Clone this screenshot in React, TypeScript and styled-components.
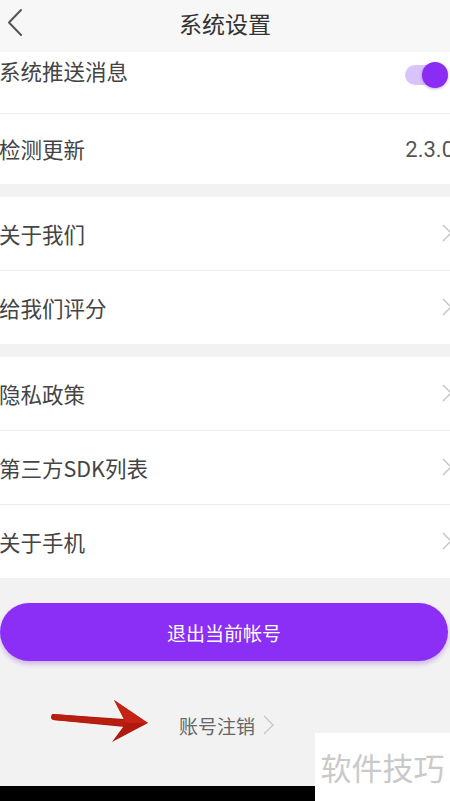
import styled, { createGlobalStyle } from "styled-components";

const GlobalStyle = createGlobalStyle`
  html, body {
    margin: 0;
    padding: 0;
    background: #f2f2f2;
  }
  * {
    box-sizing: border-box;
  }
`;

type Item = { label: string; extra?: "toggle" | "version" | "arrow"; height: number };

const groups: Item[][] = [
  [
    { label: "系统推送消息", extra: "toggle", height: 62 },
    { label: "检测更新", extra: "version", height: 70 },
  ],
  [
    { label: "关于我们", extra: "arrow", height: 74 },
    { label: "给我们评分", extra: "arrow", height: 73 },
  ],
  [
    { label: "隐私政策", extra: "arrow", height: 74 },
    { label: "第三方SDK列表", extra: "arrow", height: 74 },
    { label: "关于手机", extra: "arrow", height: 73 },
  ],
];

export default function App() {
  return (
    <Screen>
      <GlobalStyle />
      <Header>
        <BackButton>
          <svg width="18" height="30" viewBox="0 0 18 30">
            <polyline points="15,2 3,14.5 15,27" fill="none" stroke="#555" strokeWidth="2" strokeLinecap="round" strokeLinejoin="round" />
          </svg>
        </BackButton>
        <Title>系统设置</Title>
      </Header>

      {groups.map((group, gi) => (
        <Group key={gi}>
          {group.map((item, i) => (
            <Row key={item.label} $height={item.height} $top={gi === 0 && i === 0}>
              <Label>{item.label}</Label>
              {item.extra === "toggle" && (
                <Toggle>
                  <Knob />
                </Toggle>
              )}
              {item.extra === "version" && <Version>2.3.0</Version>}
              {item.extra === "arrow" && (
                <Chevron width="12" height="18" viewBox="0 0 12 18">
                  <polyline points="1,1 9,9 1,17" fill="none" stroke="#c4c4c4" strokeWidth="1.4" />
                </Chevron>
              )}
            </Row>
          ))}
        </Group>
      ))}

      <LogoutButton>退出当前帐号</LogoutButton>

      <CancelArea>
        <PointerArrow width="104" height="46" viewBox="0 0 104 46">
          <path d="M2 14 L74 19 L75 27 L3 20 Z" fill="#a8160c" />
          <line x1="4" y1="17" x2="74" y2="23" stroke="#b81d10" strokeWidth="6" strokeLinecap="round" />
          <polygon points="64,0 98,23 62,42 76,23" fill="#b01a0e" />
          <polygon points="64,0 98,23 76,23" fill="#c52415" />
        </PointerArrow>
        <CancelLink>
          账号注销
          <svg width="12" height="20" viewBox="0 0 12 20">
            <polyline points="1,1 10,10 1,19" fill="none" stroke="#c8c8c8" strokeWidth="1.4" />
          </svg>
        </CancelLink>
      </CancelArea>

      <BottomBar />
      <Watermark>软件技巧</Watermark>
    </Screen>
  );
}

const Screen = styled.div`
  position: relative;
  width: 450px;
  height: 801px;
  overflow: hidden;
  display: flex;
  flex-direction: column;
  background: #f2f2f2;
  font-family: "Noto Sans CJK SC", "Noto Sans", Roboto, sans-serif;
`;

const Header = styled.div`
  height: 52px;
  flex-shrink: 0;
  display: flex;
  align-items: center;
  justify-content: center;
  position: relative;
  background: #f7f7f7;
`;

const BackButton = styled.div`
  position: absolute;
  left: 6px;
  top: 8px;
  display: flex;
`;

const Title = styled.h1`
  margin: 0;
  margin-top: -7px;
  font-size: 23px;
  font-weight: 400;
  color: #333;
`;

const Group = styled.div`
  background: #fff;
  margin-bottom: 13px;
  flex-shrink: 0;
`;

const Row = styled.div<{ $height: number; $top?: boolean }>`
  height: ${(p) => p.$height}px;
  display: flex;
  align-items: ${(p) => (p.$top ? "flex-start" : "center")};
  justify-content: space-between;
  padding-top: ${(p) => (p.$top ? "4px" : "0")};
  border-bottom: 1px solid #ededed;
  &:last-child {
    border-bottom: none;
  }
`;

const Label = styled.span`
  font-size: 21.5px;
  color: #444;
  margin-left: -1px;
  line-height: 30px;
`;

const Version = styled.span`
  font-family: Roboto, "Noto Sans", sans-serif;
  font-size: 22px;
  color: #555;
  margin-right: -4px;
`;

const Toggle = styled.div`
  position: relative;
  width: 42px;
  height: 20px;
  margin-top: 9px;
  margin-right: 3px;
  border-radius: 10px;
  background: #d8c3fa;
`;

const Knob = styled.div`
  position: absolute;
  right: -1px;
  top: -3px;
  width: 26px;
  height: 26px;
  border-radius: 50%;
  background: #8a2cf4;
  box-shadow: 0 1px 3px rgba(80, 20, 160, 0.35);
`;

const Chevron = styled.svg`
  margin-right: -4px;
  margin-top: -2px;
`;

const LogoutButton = styled.button`
  flex-shrink: 0;
  margin: 12px 2px 0 0;
  height: 58px;
  border: none;
  border-radius: 29px;
  background: #8b2ef6;
  color: #fff;
  font-family: "Noto Sans CJK SC", "Noto Sans", sans-serif;
  font-size: 19px;
  box-shadow: 0 3px 5px rgba(110, 40, 200, 0.3);
`;

const CancelArea = styled.div`
  position: relative;
  height: 92px;
  display: flex;
  align-items: center;
  justify-content: center;
  flex-shrink: 0;
  margin-top: 18px;
`;

const PointerArrow = styled.svg`
  position: absolute;
  left: 50px;
  top: 21px;
`;

const CancelLink = styled.div`
  display: flex;
  align-items: center;
  gap: 8px;
  font-size: 19px;
  color: #666;
  margin-left: 4px;
`;

const BottomBar = styled.div`
  margin-top: auto;
  height: 15px;
  background: #000;
  flex-shrink: 0;
`;

const Watermark = styled.div`
  position: absolute;
  right: 0;
  bottom: 0;
  width: 135px;
  height: 68px;
  background: #fff;
  color: #c9c9c9;
  font-size: 31px;
  display: flex;
  align-items: center;
  justify-content: center;
  padding-bottom: 2px;
`;
